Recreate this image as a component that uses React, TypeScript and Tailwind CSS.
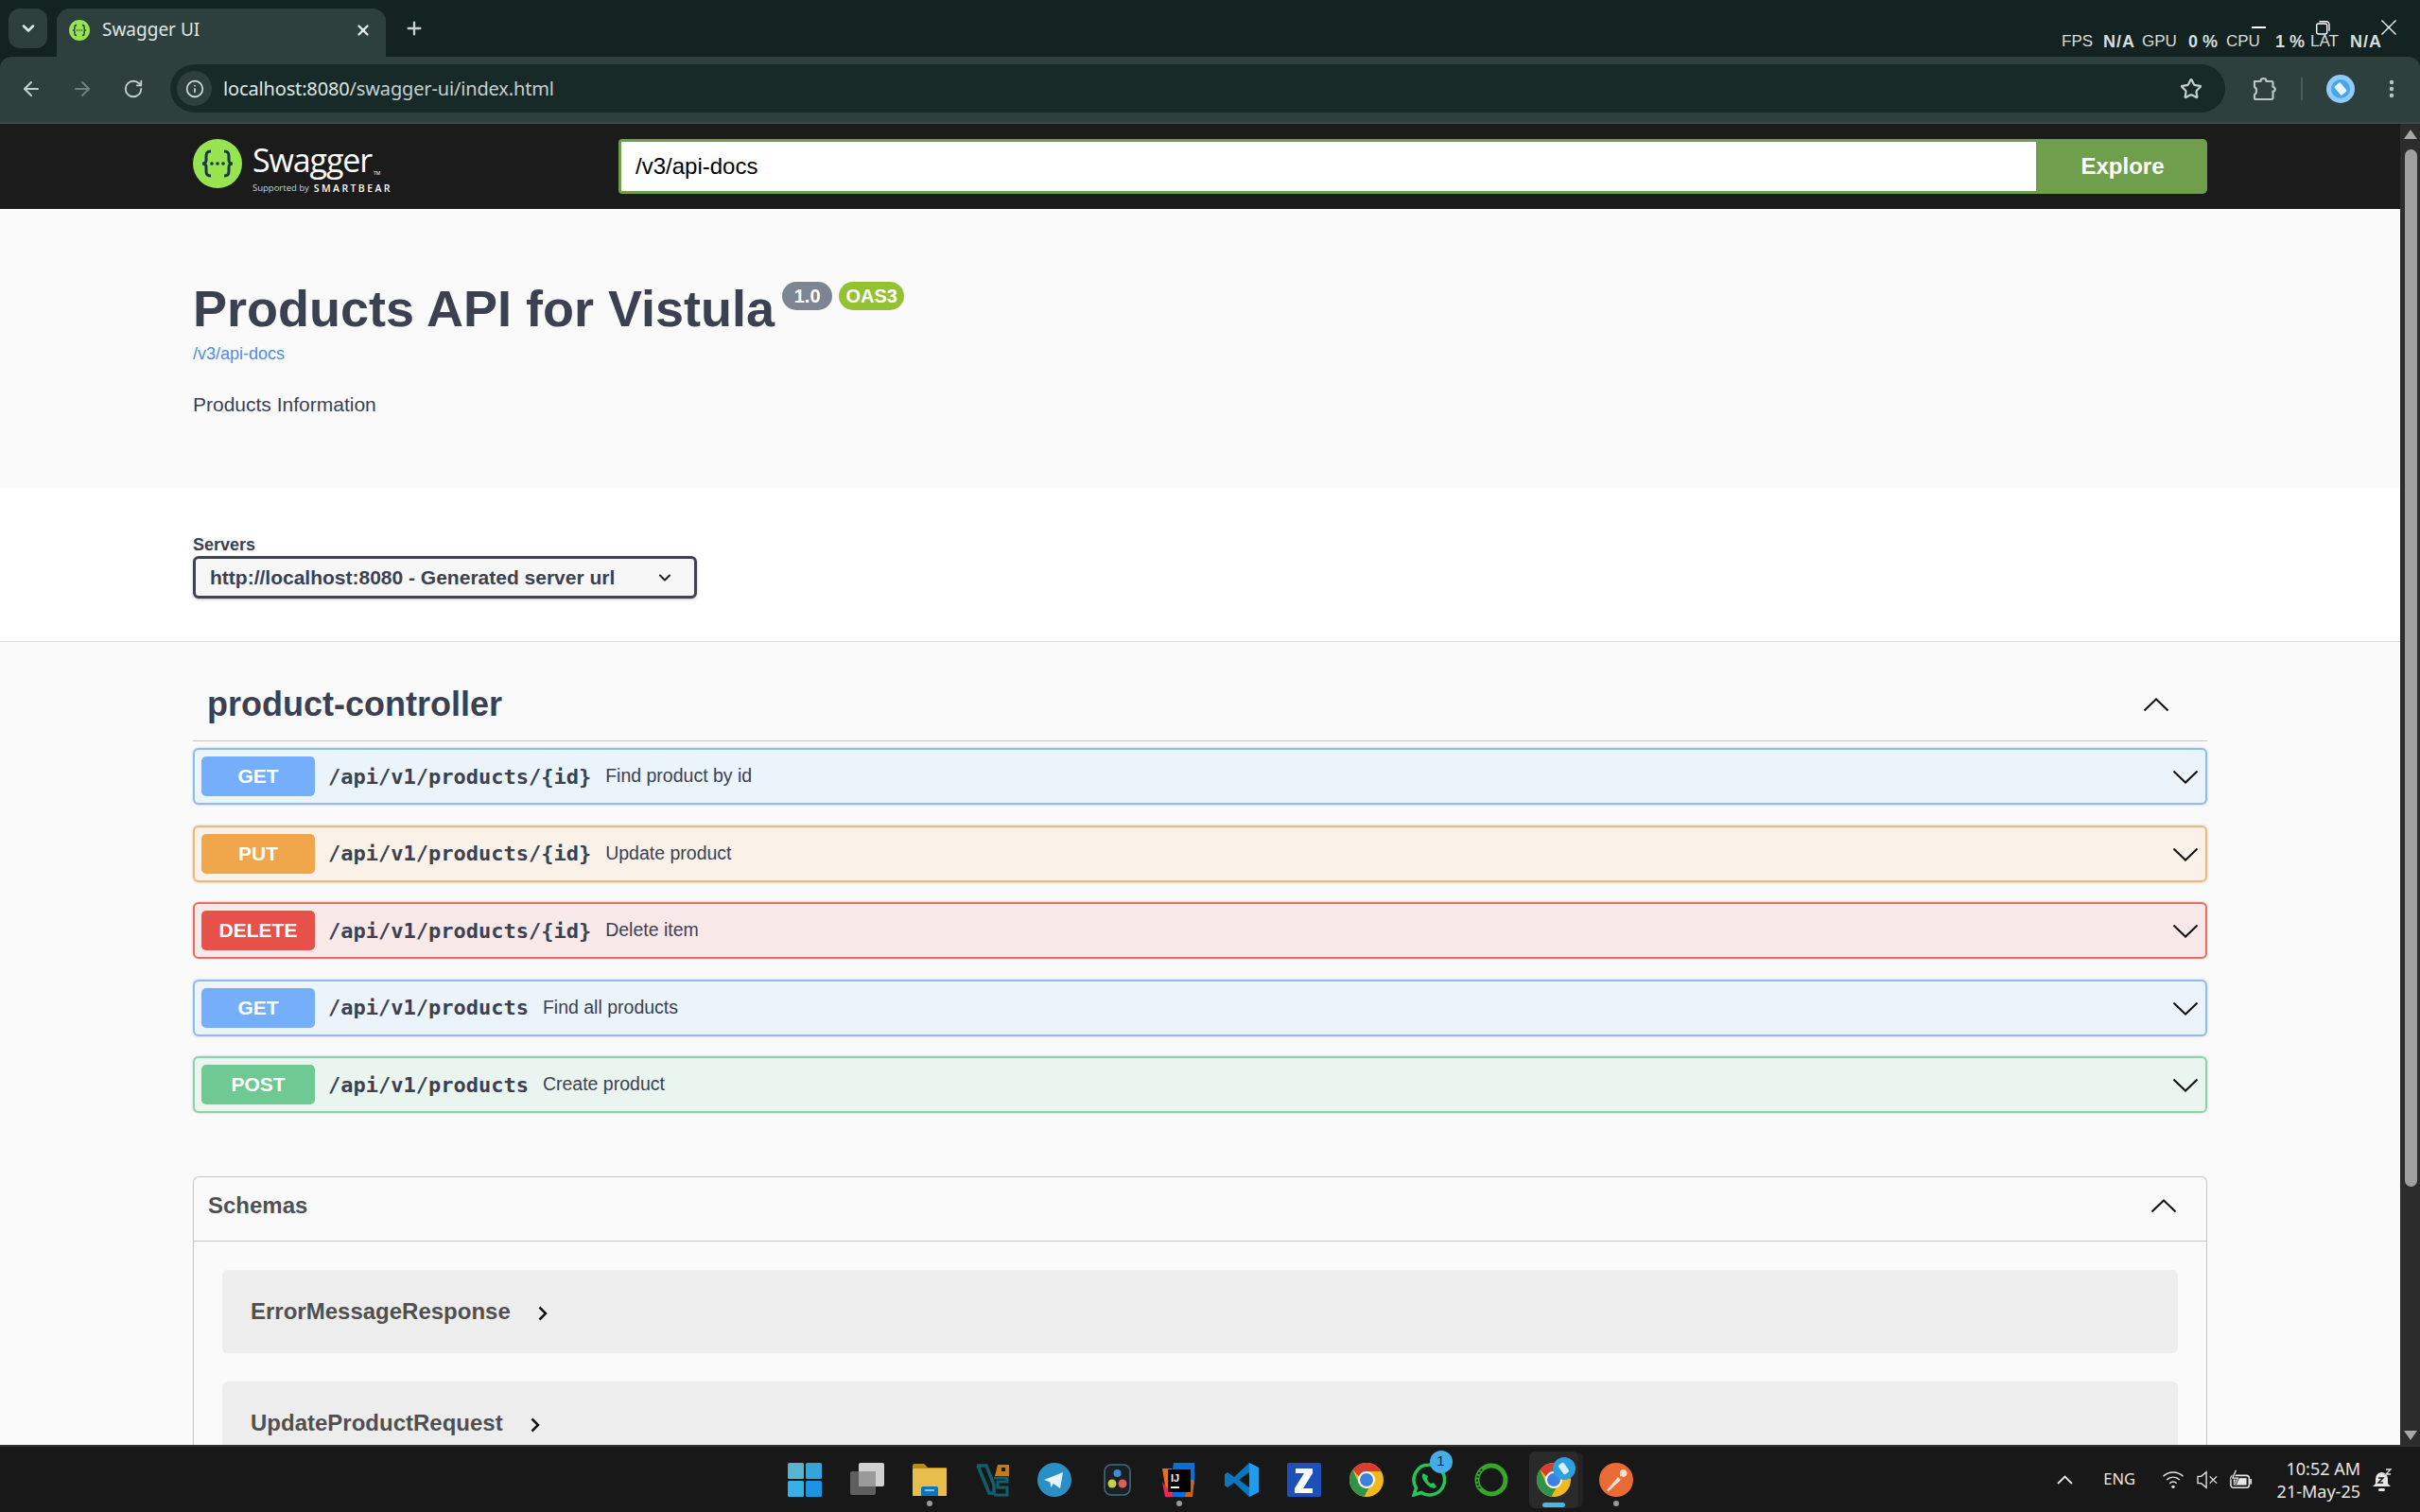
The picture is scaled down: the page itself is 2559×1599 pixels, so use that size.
import React from 'react';
import { ArrowLeft, ArrowRight, RotateCw, Star, EllipsisVertical, ChevronDown, Plus, X, Info } from 'lucide-react';

const sans = "[font-family:'Liberation_Sans',Arial,sans-serif]";

const SwaggerMark = ({ size }: { size: number }) => (
  <svg width={size} height={size} viewBox="0 0 52 52">
    <circle cx="26" cy="26" r="26" fill="#97e350" />
    <path d="M19 13c-5 0-5 3-5 6v3c0 3-1 4-4 4 3 0 4 1 4 4v3c0 3 0 6 5 6M33 13c5 0 5 3 5 6v3c0 3 1 4 4 4-3 0-4 1-4 4v3c0 3 0 6-5 6" fill="none" stroke="#173647" strokeWidth="3" />
    <circle cx="20" cy="26" r="1.800" fill="#173647" />
    <circle cx="26" cy="26" r="1.800" fill="#173647" />
    <circle cx="32" cy="26" r="1.800" fill="#173647" />
  </svg>
);

const LongChevron = ({ up }: { up?: boolean }) => (
  <svg width="26" height="14" viewBox="0 0 26 14" fill="none" stroke="#111" strokeWidth="2">
    <path d={up ? 'M0.500 13.500L13 1.500L25.500 13.500' : 'M0.500 0.500L13 12.500L25.500 0.500'} />
  </svg>
);

const ChromeIcon = () => (
  <svg width="36" height="36" viewBox="0 0 36 36">
    <circle cx="18" cy="18" r="18" fill="#f2b91f" />
    <path d="M18 0A18 18 0 0 1 33.600 9H18A9 9 0 0 0 9.800 14.300L3.500 7.300A18 18 0 0 1 18 0Z" fill="#d93d30" />
    <path d="M3.500 7.300L10.200 22.500A9 9 0 0 0 20.500 26.600L15.500 35.800A18 18 0 0 1 3.500 7.300Z" fill="#2f9447" />
    <circle cx="18" cy="18" r="9" fill="#fff" />
    <circle cx="18" cy="18" r="7" fill="#3f7fe0" />
  </svg>
);

const taskbarIcons: React.ReactNode[] = [
  <svg key="win" width="36" height="36" viewBox="0 0 36 36">
    <rect x="0" y="0" width="17" height="17" rx="1.500" fill="#56b6cf" />
    <rect x="19" y="0" width="17" height="17" rx="1.500" fill="#36a3d9" />
    <rect x="0" y="19" width="17" height="17" rx="1.500" fill="#35b1e6" />
    <rect x="19" y="19" width="17" height="17" rx="1.500" fill="#1a95e4" />
  </svg>,
  <svg key="tasks" width="36" height="36" viewBox="0 0 36 36">
    <rect x="0" y="9" width="27" height="25" rx="2" fill="#5e5e5e" />
    <rect x="9" y="0" width="27" height="25" rx="2" fill="#d0d0d0" />
    <rect x="9" y="9" width="18" height="16" fill="#9a9a9a" />
  </svg>,
  <svg key="files" width="36" height="36" viewBox="0 0 36 36">
    <path d="M0 3a2 2 0 0 1 2-2h10l4 4h20v29a1 1 0 0 1-1 1H1a1 1 0 0 1-1-1Z" fill="#b98a17" />
    <rect x="0" y="6" width="36" height="29" rx="1" fill="#e7bd4c" />
    <path d="M9 27a2 2 0 0 1 2-2h14a2 2 0 0 1 2 2v8H9Z" fill="#0c74c4" />
    <rect x="13" y="28" width="10" height="2" fill="#7cc4f2" />
  </svg>,
  <svg key="vs" width="36" height="36" viewBox="0 0 36 36" fill="none">
    <path d="M2 3h10l8 20v9h-5L3 3" stroke="#0f5f6c" strokeWidth="3.500" />
    <path d="M20 16h14v4H24v6h10v8H20" stroke="#0f5f6c" strokeWidth="3" />
    <path d="M24 2h12v12H21Z" fill="#c57a12" />
    <rect x="28" y="5" width="4" height="4" fill="#181818" />
  </svg>,
  <svg key="tg" width="36" height="36" viewBox="0 0 36 36">
    <circle cx="18" cy="18" r="18" fill="#2a8fc4" />
    <path d="M7 18L27 10L24 27L17 22L14 26L13.500 20.500Z" fill="#e6f4fb" />
  </svg>,
  <svg key="resolve" width="36" height="36" viewBox="0 0 36 36">
    <rect x="5" y="2" width="27" height="32" rx="7" fill="#1c2024" stroke="#3f6f80" strokeWidth="1.500" />
    <circle cx="18.500" cy="11" r="4" fill="#3d8fd1" />
    <circle cx="13" cy="22" r="4.500" fill="#c9cf4a" />
    <circle cx="24" cy="22" r="4.500" fill="#d8605a" />
  </svg>,
  <svg key="idea" width="36" height="36" viewBox="0 0 36 36">
    <path d="M12 0h22v22l-6 14H6Z" fill="#0a6fd6" />
    <path d="M0 6h10v30H5Z" fill="#e9701b" />
    <path d="M0 20l12 16H3Z" fill="#e6265c" />
    <path d="M28 18h6l-2 18h-8Z" fill="#c9640f" />
    <rect x="6" y="7" width="24" height="24" fill="#000" />
    <rect x="9" y="25" width="9" height="2" fill="#fff" />
    <text x="9" y="20" fill="#fff" fontSize="11" fontWeight="700" fontFamily="Liberation Sans">IJ</text>
  </svg>,
  <svg key="code" width="36" height="36" viewBox="0 0 36 36">
    <path d="M26 0L36 5V31L26 36L10 21L3 26L0 24V12L3 10L10 15Z" fill="#0a77bd" />
    <path d="M26 0L36 5V31L26 36Z" fill="#1f9cf0" />
    <path d="M26 10L15 18L26 26Z" fill="#181818" />
  </svg>,
  <svg key="z" width="36" height="36" viewBox="0 0 36 36">
    <rect x="0" y="0" width="36" height="36" rx="2" fill="#1d50b8" />
    <path d="M9 6H27V11L17 27H27V32H8V27L18 11H9Z" fill="#fff" />
  </svg>,
  <ChromeIcon key="chrome" />,
  <div key="wa" className="relative h-9 w-9">
    <svg width="36" height="36" viewBox="0 0 36 36" fill="none">
      <path d="M18 2A16 16 0 0 0 4.500 26.500L2 34L10 31.500A16 16 0 1 0 18 2Z" stroke="#25c45a" strokeWidth="3.500" />
      <path d="M12 11c-3 3 0 8 4 12s8 5 10 2l-3-4-3 1c-2-1-3-3-4-5l1-3Z" fill="#25c45a" />
    </svg>
    <span className={`absolute -right-[7px] -top-[13px] flex h-[24px] w-[24px] items-center justify-center rounded-full bg-[#45aee8] text-[15px] text-[#111] ${sans}`}>1</span>
  </div>,
  <svg key="ring" width="36" height="36" viewBox="0 0 36 36" fill="none">
    <circle cx="18" cy="18" r="15" stroke="#37a72a" strokeWidth="5" />
    <path d="M8 7A15 15 0 0 0 6 27" stroke="#181818" strokeWidth="2" strokeDasharray="2 2" />
  </svg>,
  <div key="active" className="relative flex h-[60px] w-[52px] items-center justify-center rounded-[6px] bg-[#2a2a2a] shadow-[6px_0_0_-1px_#222]">
    <ChromeIcon />
    <span className="absolute right-[3px] top-[6px] flex h-[24px] w-[24px] items-center justify-center rounded-full bg-[#2e9fe0]">
      <span className="h-[12px] w-[7px] rotate-[-35deg] rounded-[2px] bg-[#d9f1ff]" />
    </span>
    <span className="absolute bottom-[1px] h-[5px] w-[24px] rounded-full bg-[#4db5ee]" />
  </div>,
  <svg key="postman" width="36" height="36" viewBox="0 0 36 36">
    <circle cx="18" cy="18" r="18" fill="#ea6a35" />
    <path d="M8 29L20 15L23 18L10 30ZM22 9a4 4 0 1 1 4 6L22 14Z" fill="#fbe3d8" />
  </svg>,
];

// dots below the apps that are running but not focused
const runningDot = [false, false, true, false, false, false, true, false, false, false, false, false, false, true];

const rows = [
  { method: 'GET', path: '/api/v1/products/{id}', summary: 'Find product by id', row: 'border-[#8dbcf5] bg-[#ebf3fb]', badge: 'bg-[#75aefa]' },
  { method: 'PUT', path: '/api/v1/products/{id}', summary: 'Update product', row: 'border-[#f3b76f] bg-[#faf2e9]', badge: 'bg-[#f0a64a]' },
  { method: 'DELETE', path: '/api/v1/products/{id}', summary: 'Delete item', row: 'border-[#ee6a64] bg-[#f9e8e8]', badge: 'bg-[#e8504a]' },
  { method: 'GET', path: '/api/v1/products', summary: 'Find all products', row: 'border-[#8dbcf5] bg-[#ebf3fb]', badge: 'bg-[#75aefa]' },
  { method: 'POST', path: '/api/v1/products', summary: 'Create product', row: 'border-[#8ad3aa] bg-[#ebf5ef]', badge: 'bg-[#6fc992]' },
];

const BrowserChrome = () => (
  <div className="relative shrink-0 bg-[#122321]">
    {/* tab strip */}
    <div className="flex h-[60px] items-end pl-[9px]">
      <div className="mb-[9px] mr-[10px] flex h-[42px] w-[41px] items-center justify-center rounded-[12px] bg-[#2e403e]">
        <ChevronDown size={20} strokeWidth={3} className="text-[#dfe7e5]" />
      </div>
      <div className="flex h-[51px] w-[348px] items-center rounded-t-[14px] bg-[#2e403e] pb-[6px] pl-[13px]">
        <SwaggerMark size={22} />
        <span className="ml-[13px] text-[19px] text-[#dfe7e5] [font-family:'Noto_Sans',sans-serif]">Swagger UI</span>
        <X size={18} strokeWidth={3} className="ml-auto mr-[15px] text-[#e8eeec]" />
      </div>
      <Plus size={22} strokeWidth={2.500} className="mb-[19px] ml-[19px] text-[#c7d2d0]" />
    </div>
    {/* toolbar */}
    <div className="flex h-[71px] items-center rounded-t-[12px] border-b-2 border-[#3a4b49] bg-[#2e403e] pb-[2px]">
      <div className="flex w-[180px] items-center pl-[21px]">
        <ArrowLeft size={24} className="text-[#c5d0ce]" />
        <ArrowRight size={24} className="ml-[30px] text-[#6f807e]" />
        <RotateCw size={22} className="ml-[31px] text-[#c5d0ce]" />
      </div>
      <div className="flex h-[51px] w-[2173px] items-center rounded-full bg-[#182a28] pl-[7px] pr-[24px]">
        <div className="flex h-[37px] w-[37px] items-center justify-center rounded-full bg-[#2e403e]">
          <Info size={20} className="text-[#d5dedc]" />
        </div>
        <span className="ml-[12px] mt-[1px] text-[20px] tracking-[-0.15px] text-[#dfe7e5] [font-family:'Noto_Sans',sans-serif]">
          localhost:8080<span className="text-[#c5d0ce]">/swagger-ui/index.html</span>
        </span>
        <Star size={24} strokeWidth={2.200} className="ml-auto text-[#c5d0ce]" />
      </div>
      {/* extension puzzle piece */}
      <svg className="ml-[29px]" width="25" height="26" viewBox="0 0 25 26" fill="none" stroke="#b9c6c4" strokeWidth="2.200">
        <path d="M2 5h6.500a3 3 0 0 1 6 0H20a1.500 1.500 0 0 1 1.500 1.500V11a2.300 2.300 0 0 1 0 4.600v7a1.500 1.500 0 0 1-1.500 1.400H3.500A1.500 1.500 0 0 1 2 22.500V19a4 4 0 0 0 2-4 4 4 0 0 0-2-4V5Z" strokeLinejoin="round" />
      </svg>
      <div className="ml-[26px] h-[24px] w-[2px] bg-[#4a5a58]" />
      <div className="ml-[25px] flex h-[30px] w-[30px] items-center justify-center rounded-full bg-[#8ecdfb]">
        <div className="flex h-[20px] w-[20px] items-center justify-center rounded-full bg-[#4ba3ec]">
          <div className="h-[12px] w-[8px] -rotate-[40deg] rounded-[1px] bg-[#e6f4fd]" />
        </div>
      </div>
      <EllipsisVertical size={24} strokeWidth={2.500} className="ml-[27px] text-[#b9c6c4]" />
    </div>
    {/* monitor overlay and window buttons */}
    <div className="absolute right-[41px] top-[34px] flex items-center whitespace-nowrap text-[17px] leading-[20px] text-[#d8dcdb] [font-family:'Liberation_Sans',sans-serif]">
      <span className="w-[33px]">FPS</span>
      <b className="ml-[11px] w-[33px] text-[18px] tracking-[1px]">N/A</b>
      <span className="ml-[8px] w-[37px]">GPU</span>
      <b className="ml-[12px] w-[30px] text-[18px]">0 %</b>
      <span className="ml-[10px] w-[37px]">CPU</span>
      <b className="ml-[15px] w-[27px] text-[18px]">1 %</b>
      <span className="ml-[10px] w-[32px]">LAT</span>
      <b className="ml-[10px] w-[33px] text-[18px] tracking-[1px]">N/A</b>
    </div>
    <div className="absolute right-[25px] top-[21px] flex h-[16px] items-center">
      <div className="h-[2px] w-[15px] bg-white" />
      <svg className="ml-[53px]" width="15" height="15" viewBox="0 0 15 15" fill="none" stroke="#fff" strokeWidth="1.400">
        <rect x="0.700" y="3" width="11" height="11" rx="2" />
        <path d="M3.500 0.800h7.500a3 3 0 0 1 3 3v7" />
      </svg>
      <svg className="ml-[54px]" width="16" height="16" viewBox="0 0 16 16" fill="none" stroke="#fff" strokeWidth="1.400">
        <path d="M0.500 0.500L15.500 15.500M15.500 0.500L0.500 15.500" />
      </svg>
    </div>
  </div>
);

const SwaggerBar = () => (
  <div className="flex h-[90px] shrink-0 items-center bg-[#1b1b1b] pl-[204px] pr-[204px]">
    <div className="flex w-[450px] items-start">
      <SwaggerMark size={52} />
      <div className="ml-[11px] flex flex-col text-white">
        <div className="flex h-[45px] items-start">
          <span className="text-[34px] leading-[44px] tracking-[-1.1px] [font-family:'Open_Sans',sans-serif]">Swagger</span>
          <span className="ml-[2px] mt-[33px] text-[5px] leading-[6px]">TM</span>
        </div>
        <div className="flex items-center whitespace-nowrap leading-[14px] [font-family:'Open_Sans',sans-serif]">
          <span className="text-[9.500px] text-[#d0d0d0]">Supported by</span>
          <span className="ml-[5px] text-[10.500px] font-semibold tracking-[2.400px]">SMARTBEAR</span>
        </div>
      </div>
    </div>
    <div className="flex h-[58px] flex-1">
      <div className={`flex flex-1 items-center rounded-l-[4px] border-[3px] border-r-0 border-[#6f9f4d] bg-white pl-[15px] text-[24px] text-black ${sans}`}>/v3/api-docs</div>
      <div className={`flex w-[181px] items-center justify-center rounded-r-[5px] bg-[#6f9f4d] pl-[2px] text-[24px] font-bold text-white ${sans}`}>Explore</div>
    </div>
  </div>
);

const InfoSection = () => (
  <div className={`h-[295px] shrink-0 bg-[#fafafa] px-[204px] pt-[70px] text-[#3b4151] ${sans}`}>
    <div className="flex items-start">
      <h1 className="text-[54px] font-bold leading-[70px]">Products API for Vistula</h1>
      <span className="ml-[8px] mt-[7px] flex h-[30px] w-[53px] items-center justify-center rounded-full bg-[#7d8492] text-[20px] font-bold text-white">1.0</span>
      <span className="ml-[7px] mt-[7px] flex h-[30px] w-[69px] items-center justify-center rounded-full bg-[#93c132] text-[20px] font-bold text-white">OAS3</span>
    </div>
    <div className="mt-[1px] text-[18px] leading-[24px] text-[#4b8fe0]">/v3/api-docs</div>
    <p className="mt-[30px] text-[21px] leading-[24px]">Products Information</p>
  </div>
);

const ServersSection = () => (
  <div className={`h-[163px] shrink-0 border-b border-[#d9d9d9] bg-white px-[204px] pt-[48px] text-[#3b4151] ${sans}`}>
    <div className="text-[18px] font-bold leading-[24px]">Servers</div>
    <div className="flex h-[45px] w-[533px] items-center rounded-[6px] border-[3px] border-[#41444e] bg-[#f7f7f7] pl-[15px] pr-[21px] text-[21px] font-bold shadow-[0_1px_3px_rgba(0,0,0,0.25)]">
      <span>http://localhost:8080 - Generated server url</span>
      <ChevronDown size={20} strokeWidth={2.500} className="ml-auto text-[#222]" />
    </div>
  </div>
);

const Operations = () => (
  <div className={`flex-1 bg-[#fafafa] px-[204px] text-[#3b4151] ${sans}`}>
    <div className="flex h-[105px] items-center border-b border-[#c4c4c4] pl-[15px] pr-[41px] pt-[28px]">
      <h3 className="text-[36px] font-bold leading-[44px]">product-controller</h3>
      <div className="ml-auto"><LongChevron up /></div>
    </div>
    <div className="mt-[7px] flex flex-col gap-[21.500px]">
      {rows.map((r, i) => (
        <div key={i} className={`flex h-[60px] items-center rounded-[6px] border-[2px] pl-[7px] pr-[8px] shadow-[0_0_3px_rgba(0,0,0,0.19)] ${r.row}`}>
          <span className={`flex h-[42px] w-[120px] items-center justify-center rounded-[5px] text-[21px] font-bold text-white ${r.badge}`}>{r.method}</span>
          <span className="ml-[14px] text-[22px] font-bold [font-family:'DejaVu_Sans_Mono',monospace]">{r.path}</span>
          <span className="ml-[15px] text-[19.500px]">{r.summary}</span>
          <div className="ml-auto mt-[2px]"><LongChevron /></div>
        </div>
      ))}
    </div>
    <div className="mt-[67px] rounded-t-[6px] border border-b-0 border-[#c4c4c4]">
      <div className="flex h-[68px] items-center border-b border-[#c4c4c4] pb-[7px] pl-[15px] pr-[32px]">
        <h4 className="text-[24px] font-bold text-[#505050]">Schemas</h4>
        <div className="ml-auto"><LongChevron up /></div>
      </div>
      <div className="flex flex-col gap-[30px] px-[30px] pt-[30px]">
        {['ErrorMessageResponse', 'UpdateProductRequest'].map((name) => (
          <div key={name} className="flex h-[88px] items-center rounded-[6px] bg-[#ededed] pl-[30px]">
            <span className="text-[24px] font-bold text-[#505050]">{name}</span>
            <svg className="ml-[29px] mt-[3px]" width="10" height="16" viewBox="0 0 10 16" fill="none" stroke="#111" strokeWidth="2.500">
              <path d="M1.500 1.500L8 8L1.500 14.500" />
            </svg>
          </div>
        ))}
      </div>
    </div>
  </div>
);

const Scrollbar = () => (
  <div className="flex w-[21px] shrink-0 flex-col items-center bg-[#2c2c2c]">
    <div className="mt-[6px] h-0 w-0 border-x-[7px] border-b-[10px] border-x-transparent border-b-[#a8a8a8]" />
    <div className="ml-[1px] mt-[11px] h-[1097px] w-[13px] rounded-full bg-[#9f9f9f]" />
    <div className="mb-[5px] mt-auto h-0 w-0 border-x-[7px] border-t-[10px] border-x-transparent border-t-[#a8a8a8]" />
  </div>
);

const Taskbar = () => (
  <div className="grid h-[71px] shrink-0 grid-cols-[1fr_auto_1fr] border-t-2 border-[#2f2f2f] bg-[#181818] [font-family:'Noto_Sans',sans-serif]">
    <div />
    <div className="flex items-center">
      {taskbarIcons.map((icon, i) => (
        <div key={i} className="relative flex h-[69px] w-[66px] items-center justify-center">
          {icon}
          {runningDot[i] && <span className="absolute bottom-[6px] h-[6px] w-[6px] rounded-full bg-[#9a9a9a]" />}
        </div>
      ))}
    </div>
    <div className="flex items-center justify-end pr-[29px] text-[#e6e6e6]">
      <svg width="17" height="10" viewBox="0 0 17 10" fill="none" stroke="#e6e6e6" strokeWidth="1.800">
        <path d="M1 9L8.500 1.500L16 9" />
      </svg>
      <span className="ml-[32px] text-[16.500px]">ENG</span>
      <svg className="ml-[28px]" width="24" height="20" viewBox="0 0 26 22" fill="none" stroke="#e6e6e6" strokeWidth="1.600">
        <path d="M1.500 7a16 16 0 0 1 23 0M5.500 11a10.500 10.500 0 0 1 15 0M9 15a5.500 5.500 0 0 1 8 0" />
        <circle cx="13" cy="19" r="1.800" fill="#e6e6e6" stroke="none" />
      </svg>
      <svg className="ml-[13px]" width="22" height="20" viewBox="0 0 24 22" fill="none" stroke="#e6e6e6" strokeWidth="1.500">
        <path d="M1 7v8h4l6 5V2L5 7ZM15 7l8 8M23 7l-8 8" />
      </svg>
      <svg className="ml-[13px]" width="24" height="24" viewBox="0 0 26 24" fill="none" stroke="#e6e6e6" strokeWidth="1.700">
        <rect x="1" y="7" width="21" height="14" rx="3" />
        <rect x="4" y="10" width="15" height="8" fill="#e6e6e6" stroke="none" />
        <rect x="23" y="11" width="2" height="6" fill="#e6e6e6" stroke="none" />
        <path d="M7 1L3 10H9L6 17" stroke="#181818" strokeWidth="3" />
        <path d="M7 1L3 10H9L6 17" strokeWidth="1.400" />
      </svg>
      <div className="ml-[26px] flex w-[88px] flex-col items-end whitespace-nowrap text-[18px] leading-[24px]">
        <span>10:52 AM</span>
        <span>21-May-25</span>
      </div>
      {/* notifications, do not disturb */}
      <svg className="ml-[12px]" width="22" height="26" viewBox="0 0 22 26">
        <path d="M10 5a7 7 0 0 1 7 7v5l3 3H1l3-3v-5a7 7 0 0 1 6-7Z" fill="#e6e6e6" />
        <rect x="7" y="22" width="7" height="3" rx="1.500" fill="#e6e6e6" />
        <path d="M7 11h5l-5 5h5M15 2h5l-5 5h5" fill="none" stroke="#181818" strokeWidth="1.500" />
        <path d="M15 2h5l-5 5h5" fill="none" stroke="#e6e6e6" strokeWidth="1.300" />
      </svg>
    </div>
  </div>
);

export default function App() {
  return (
    <div className="flex h-[1599px] w-[2559px] flex-col overflow-hidden bg-[#fafafa]">
      <BrowserChrome />
      <div className="flex min-h-0 flex-1">
        <div className="flex min-w-0 flex-1 flex-col overflow-hidden">
          <SwaggerBar />
          <InfoSection />
          <ServersSection />
          <Operations />
        </div>
        <Scrollbar />
      </div>
      <Taskbar />
    </div>
  );
}
